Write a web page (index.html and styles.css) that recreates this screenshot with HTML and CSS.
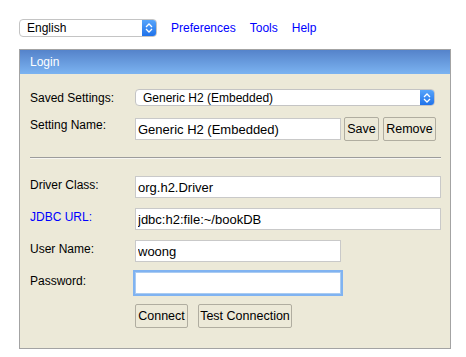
FILE: index.html
```html
<!DOCTYPE html>
<html lang="en">
<head>
    <meta charset="UTF-8">
    <title>H2 Console</title>
    <link rel="stylesheet" href="styles.css">
</head>
<body>
    <div class="topbar">
        <div class="picker lang">
            <select><option>English</option></select>
            <span class="arrow"><svg width="8" height="10" viewBox="0 0 8 10"><path d="M1 4 L4 1 L7 4 M1 6 L4 9 L7 6" fill="none" stroke="#fff" stroke-width="1.3"/></svg></span>
        </div>
        <a href="#">Preferences</a>
        <a href="#">Tools</a>
        <a href="#">Help</a>
    </div>

    <div class="panel">
        <div class="panel-head">Login</div>
        <div class="panel-body">
            <div class="row row-select">
                <label>Saved Settings:</label>
                <div class="picker saved">
                    <select><option>Generic H2 (Embedded)</option></select>
                    <span class="arrow"><svg width="8" height="10" viewBox="0 0 8 10"><path d="M1 4 L4 1 L7 4 M1 6 L4 9 L7 6" fill="none" stroke="#fff" stroke-width="1.3"/></svg></span>
                </div>
            </div>
            <div class="row row-name">
                <label>Setting Name:</label>
                <input class="short" type="text" value="Generic H2 (Embedded)">
                <button class="save">Save</button>
                <button class="remove">Remove</button>
            </div>
            <hr>
            <div class="row">
                <label>Driver Class:</label>
                <input class="long" type="text" value="org.h2.Driver">
            </div>
            <div class="row">
                <label><a href="#">JDBC URL:</a></label>
                <input class="long" type="text" value="jdbc:h2:file:~/bookDB">
            </div>
            <div class="row">
                <label>User Name:</label>
                <input class="short" type="text" value="woong">
            </div>
            <div class="row">
                <label>Password:</label>
                <input class="short focus" type="password" value="">
            </div>
            <div class="row actions">
                <label></label>
                <button>Connect</button>
                <button class="test">Test Connection</button>
            </div>
        </div>
    </div>
</body>
</html>
```

FILE: styles.css
```css
/* General Styling */
body {
    font-family: "Liberation Sans", Arial, sans-serif;
    font-size: 12px;
    margin: 0;
    padding: 19px 0 0 19px;
    background: #ffffff;
    color: #000000;
}
.topbar {
    display: flex;
    align-items: center;
    height: 18px;
}
.topbar a {
    color: #0000ff;
    text-decoration: none;
    font-size: 12px;
    margin-left: 14px;
}
.picker {
    display: flex;
    box-sizing: border-box;
    border: 1px solid #c4c4c4;
    border-radius: 4px;
    background: #ffffff;
    overflow: hidden;
}
.picker select {
    appearance: none;
    -webkit-appearance: none;
    border: none;
    background: transparent;
    font-family: "Liberation Sans", Arial, sans-serif;
    font-size: 12px;
    padding: 0 0 0 7px;
    margin: 0;
    flex: 1;
    outline: none;
    color: #000000;
}
.picker .arrow {
    width: 14px;
    display: flex;
    align-items: center;
    justify-content: center;
    background: linear-gradient(#57a5fb, #1f72ea);
}
.lang {
    width: 138px;
    height: 18px;
}
.saved {
    width: 300px;
    height: 17px;
}
.panel {
    width: 432px;
    box-sizing: border-box;
    margin-top: 12px;
    border: 1px solid #a3a3a3;
    background: #ece9d8;
}
.panel-head {
    height: 24px;
    line-height: 24px;
    padding-left: 10px;
    color: #ffffff;
    font-size: 12px;
    background: linear-gradient(#5583ca, #7bb3f1);
}
.panel-body {
    padding: 15px 9px 20px 10px;
}
.row {
    display: flex;
    align-items: flex-start;
    margin-bottom: 10px;
}
.row label {
    width: 105px;
    flex: none;
    line-height: 14px;
    padding-top: 2px;
}
.row label a {
    color: #0000ff;
    text-decoration: none;
}
.row-select {
    align-items: center;
    margin-bottom: 11px;
}
.row-select label {
    padding-top: 0;
}
.row-name {
    align-items: center;
    margin-bottom: 16px;
}
.row-name label {
    padding-top: 0;
    margin-top: -8px;
}
input {
    box-sizing: border-box;
    height: 22px;
    border: 1px solid #c9c9c9;
    background: #ffffff;
    font-family: "Liberation Sans", Arial, sans-serif;
    font-size: 13px;
    padding: 0 2px;
    margin: 0;
    outline: none;
}
input.long {
    width: 306px;
}
input.short {
    width: 206px;
}
input.focus {
    border: 1px solid #a9cbf2;
    box-shadow: 0 0 0 2px #80b3f1;
}
hr {
    border: none;
    border-top: 1px solid #9c9c9c;
    border-bottom: 1px solid #f7f6f2;
    margin: 0 0 17px 0;
}
button {
    box-sizing: border-box;
    height: 24px;
    padding: 0;
    border: 1px solid #b0ada0;
    border-radius: 2px;
    background: #ece9d8;
    font-family: "Liberation Sans", Arial, sans-serif;
    font-size: 12.5px;
    color: #000000;
    white-space: nowrap;
    cursor: pointer;
}
button.save {
    width: 35px;
    margin-left: 3px;
}
button.remove {
    width: 53px;
    margin-left: 4px;
}
.actions {
    margin-bottom: 0;
}
.actions button {
    width: 53px;
}
.actions button.test {
    width: 94px;
    margin-left: 10px;
}
```
